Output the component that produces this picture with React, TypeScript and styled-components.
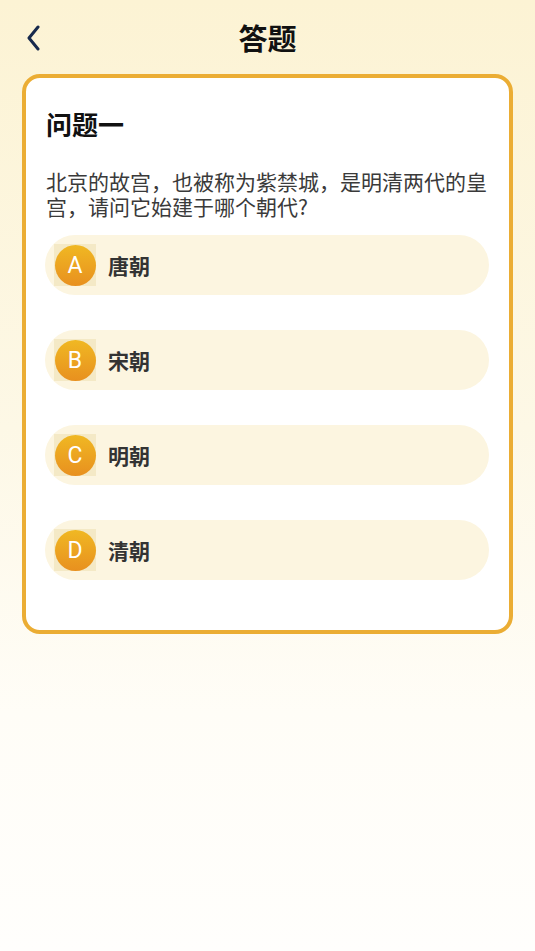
import React from "react";
import styled, { createGlobalStyle } from "styled-components";

const GlobalStyle = createGlobalStyle`
  html, body { margin: 0; padding: 0; }
  body {
    font-family: "Noto Sans CJK SC", "Noto Sans", sans-serif;
    background: #fffefb;
  }
  * { box-sizing: border-box; }
`;

const Page = styled.div`
  width: 535px;
  min-height: 951px;
  background: linear-gradient(180deg, #fcf3d4 0%, #fdf8e6 45%, #fffdf7 75%, #fffefc 100%);
  display: flex;
  flex-direction: column;
`;

const Header = styled.header`
  height: 74px;
  display: grid;
  grid-template-columns: 60px 1fr 60px;
  align-items: center;
`;

const BackButton = styled.button`
  border: none;
  background: none;
  padding: 2px 0 0 26px;
  display: flex;
  align-items: center;
  height: 40px;
  cursor: pointer;
`;

const Title = styled.h1`
  margin: 0;
  text-align: center;
  font-size: 29px;
  font-weight: 700;
  color: #111;
  line-height: 40px;
`;

const Card = styled.section`
  margin: 0 22px;
  border: 4px solid #ebad34;
  border-radius: 18px;
  background: #fff;
  padding: 28px 20px 50px 19px;
  display: flex;
  flex-direction: column;
`;

const QTitle = styled.h2`
  margin: 0 0 0 1px;
  font-size: 26px;
  font-weight: 700;
  line-height: 36px;
  color: #111;
`;

const QText = styled.p`
  margin: 27px 0 16px 1px;
  font-size: 21px;
  line-height: 25px;
  color: #3a3a3a;
`;

const Options = styled.div`
  display: flex;
  flex-direction: column;
  gap: 35px;
`;

const Option = styled.div`
  height: 60px;
  border-radius: 30px;
  background: #fcf5e0;
  display: flex;
  align-items: center;
  padding-left: 9px;
  gap: 12px;
`;

const BadgeBox = styled.div`
  width: 42px;
  height: 42px;
  background: #f4e9c6;
  display: flex;
  align-items: center;
  justify-content: center;
`;

const Badge = styled.div`
  width: 41px;
  height: 41px;
  border-radius: 50%;
  background: linear-gradient(180deg, #f0b823 0%, #e8901f 100%);
  color: #fff;
  font-family: "Roboto", "Noto Sans", sans-serif;
  font-size: 23px;
  display: flex;
  align-items: center;
  justify-content: center;
`;

const OptionText = styled.span`
  font-size: 21px;
  font-weight: 700;
  color: #333;
`;

const options = [
  { key: "A", text: "唐朝" },
  { key: "B", text: "宋朝" },
  { key: "C", text: "明朝" },
  { key: "D", text: "清朝" },
];

export default function App() {
  return (
    <Page>
      <GlobalStyle />
      <Header>
        <BackButton aria-label="返回">
          <svg width="16" height="26" viewBox="0 0 16 26" fill="none">
            <path d="M12 2 L3 13 L12 24" stroke="#172a4d" strokeWidth="3" strokeLinecap="round" strokeLinejoin="round" />
          </svg>
        </BackButton>
        <Title>答题</Title>
        <div />
      </Header>
      <Card>
        <QTitle>问题一</QTitle>
        <QText>北京的故宫，也被称为紫禁城，是明清两代的皇宫，请问它始建于哪个朝代?</QText>
        <Options>
          {options.map((o) => (
            <Option key={o.key}>
              <BadgeBox>
                <Badge>{o.key}</Badge>
              </BadgeBox>
              <OptionText>{o.text}</OptionText>
            </Option>
          ))}
        </Options>
      </Card>
    </Page>
  );
}
